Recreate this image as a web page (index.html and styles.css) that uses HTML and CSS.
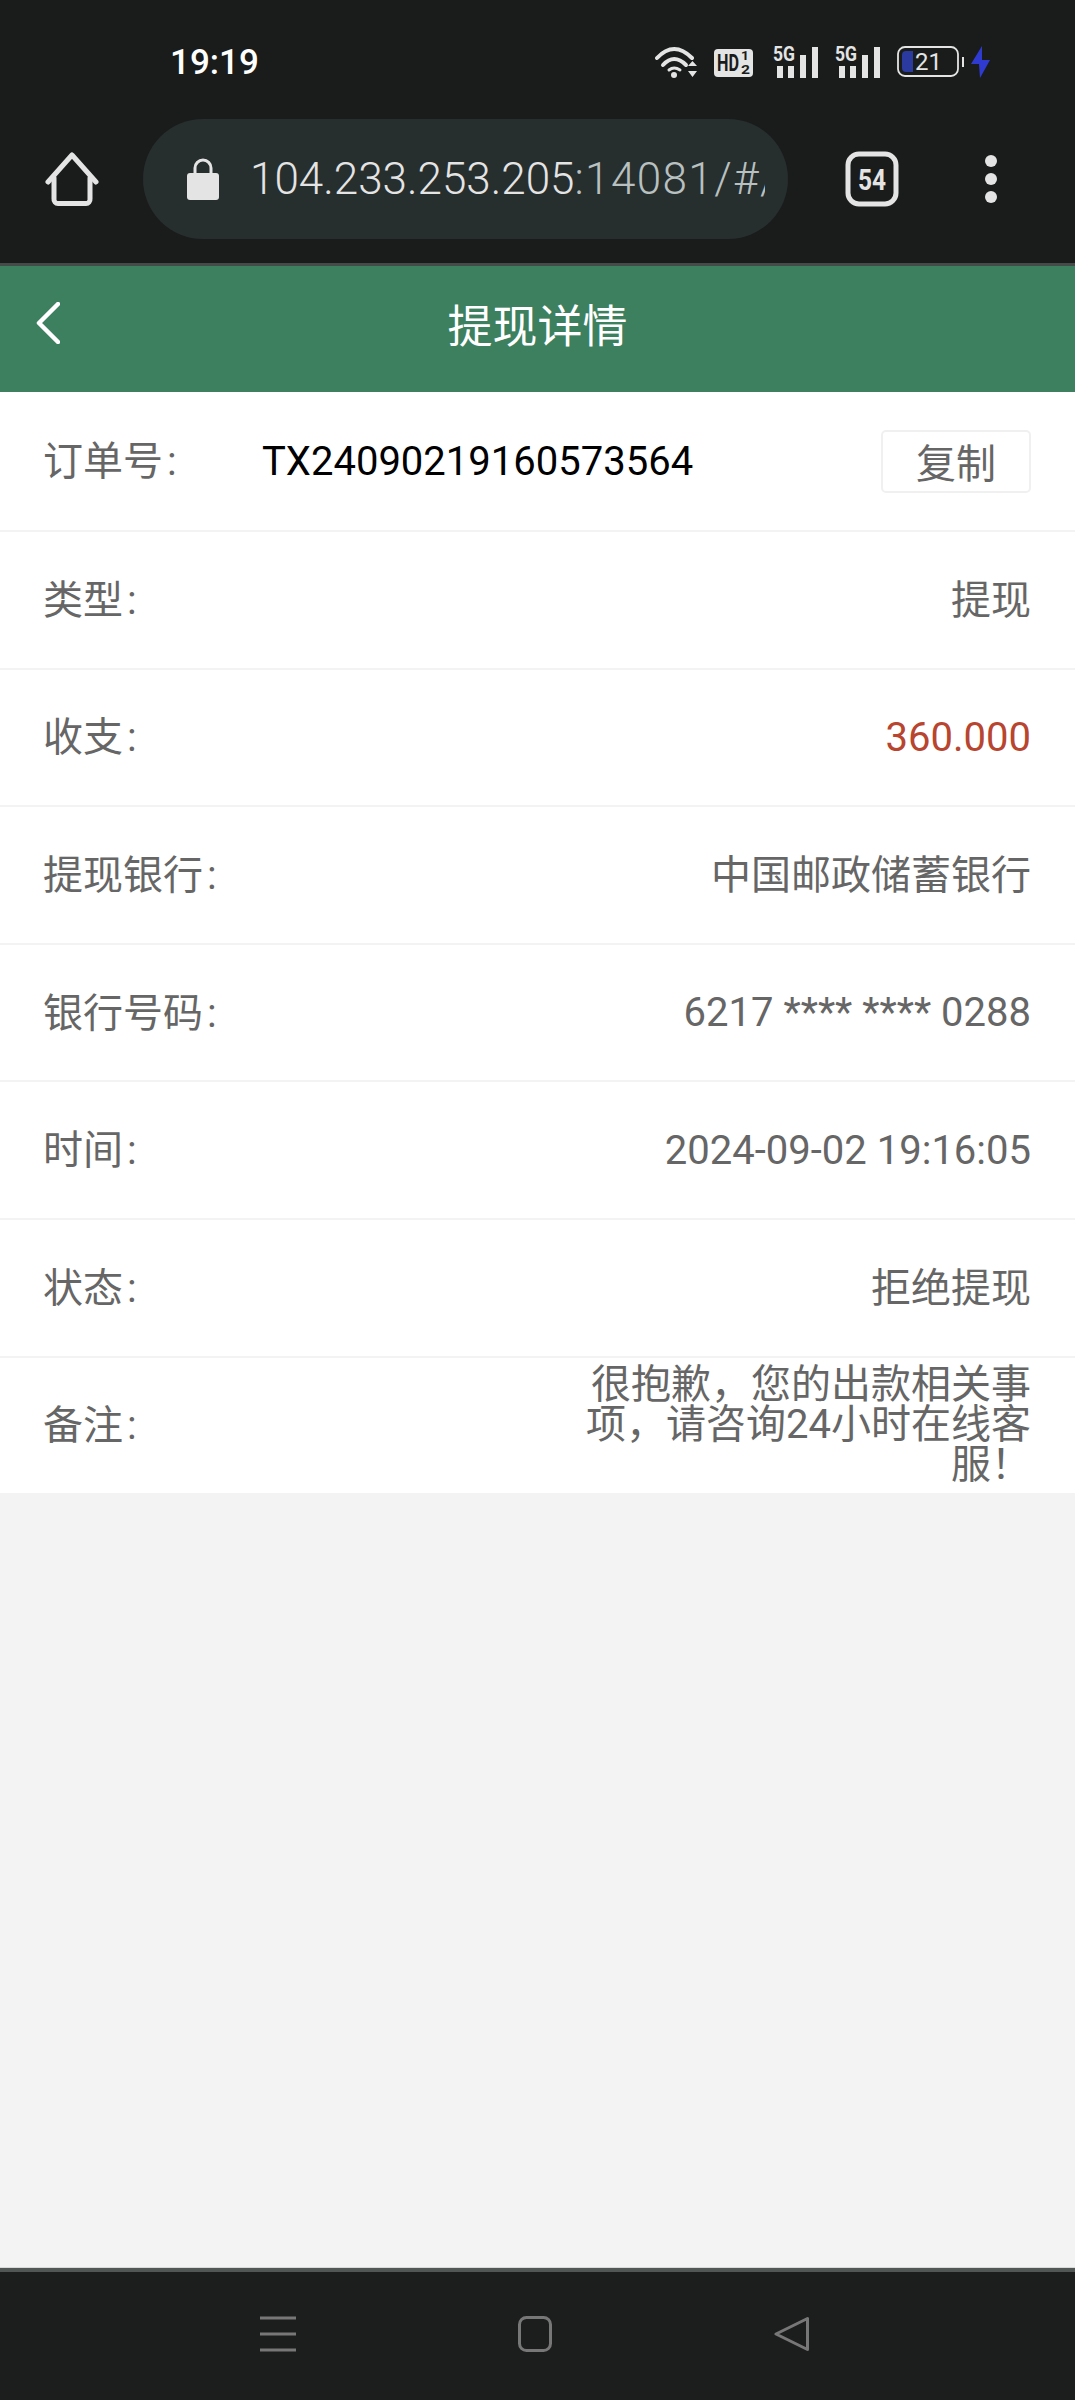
FILE: index.html
```html
<!DOCTYPE html>
<html lang="zh-CN">
<head>
    <meta charset="UTF-8">
    <meta name="viewport" content="width=device-width, initial-scale=1.0">
    <title>提现详情</title>
    <link rel="stylesheet" href="styles.css">
</head>
<body>
    <div class="status-bar">
        <span class="clock">19:19</span>
        <div class="status-icons">
            <svg class="icon-wifi" width="43" height="34" viewBox="0 0 43 34" fill="none" stroke="#e4e4e4" stroke-width="4" stroke-linecap="round">
                <path d="M2 13Q19 -5 37 13"/>
                <path d="M8 20Q19 8 31 20"/>
                <path d="M14 25Q19 21 25 25" stroke-width="3"/>
                <circle cx="19" cy="30" r="3" fill="#e4e4e4" stroke="none"/>
                <path d="M33 21H42L37.500 16ZM33 26H42L37.500 32Z" fill="#e4e4e4" stroke="none"/>
            </svg>
            <svg class="icon-hd" width="39" height="28" viewBox="0 0 39 28">
                <rect width="39" height="28" rx="4" fill="#e4e4e4"/>
                <text class="hd-text" x="3" y="22" textLength="22" lengthAdjust="spacingAndGlyphs">HD</text>
                <text class="hd-frac" x="27" y="11" textLength="8" lengthAdjust="spacingAndGlyphs">1</text>
                <text class="hd-frac" x="27" y="25" textLength="9" lengthAdjust="spacingAndGlyphs">2</text>
            </svg>
            <svg class="icon-signal" width="46" height="36" viewBox="0 -4 46 36" fill="#e4e4e4">
                <text class="sig-text" x="0" y="15" textLength="22" lengthAdjust="spacingAndGlyphs">5G</text>
                <rect x="4" y="20" width="6" height="12"/>
                <rect x="15" y="20" width="6" height="12"/>
                <rect x="27" y="9" width="6" height="23"/>
                <rect x="39" y="1" width="6" height="31"/>
            </svg>
            <svg class="icon-signal icon-signal-2" width="46" height="36" viewBox="0 -4 46 36" fill="#e4e4e4">
                <text class="sig-text" x="0" y="15" textLength="22" lengthAdjust="spacingAndGlyphs">5G</text>
                <rect x="4" y="20" width="6" height="12"/>
                <rect x="15" y="20" width="6" height="12"/>
                <rect x="27" y="9" width="6" height="23"/>
                <rect x="39" y="1" width="6" height="31"/>
            </svg>
            <svg class="icon-battery" width="68" height="32" viewBox="0 0 68 32">
                <rect x="1" y="1" width="60" height="29" rx="7" fill="none" stroke="#e4e4e4" stroke-width="1.800"/>
                <path d="M5 9a4 4 0 0 1 4-4H16V26H9a4 4 0 0 1-4-4Z" fill="#2b3a9e"/>
                <rect x="65" y="11" width="2" height="10" fill="#e4e4e4"/>
                <text class="batt-text" x="18" y="24">21</text>
            </svg>
            <svg class="icon-bolt" width="20" height="32" viewBox="0 0 20 32">
                <path d="M11 0L0 18H8L9 32L19 14H11Z" fill="#2f3bd0"/>
            </svg>
        </div>
    </div>

    <div class="toolbar">
        <svg class="tool-home" width="54" height="56" viewBox="0 0 54 56" fill="none" stroke="#e4e4e4" stroke-width="5" stroke-linejoin="round" stroke-linecap="round">
            <path d="M3 31L27 4L51 31"/>
            <path d="M9 27V48a4 4 0 0 0 4 4.500H41a4 4 0 0 0 4-4.500V27"/>
        </svg>
        <div class="url-pill">
            <svg class="lock" width="32" height="42" viewBox="0 0 32 42">
                <path d="M8 16V10a8 8 0 0 1 16 0V16" fill="none" stroke="#e4e4e4" stroke-width="3"/>
                <rect y="15" width="32" height="27" rx="3" fill="#e4e4e4"/>
            </svg>
            <div class="url-text"><span class="url-host">104.233.253.205</span>:14081/#/</div>
        </div>
        <svg class="tool-tabs" width="54" height="56" viewBox="0 0 54 56">
            <rect x="3" y="3" width="48" height="50" rx="11" fill="none" stroke="#e4e4e4" stroke-width="5"/>
            <text class="tab-count" x="13" y="39" textLength="28" lengthAdjust="spacingAndGlyphs">54</text>
        </svg>
        <div class="tool-menu">
            <span class="dot"></span>
            <span class="dot"></span>
            <span class="dot"></span>
        </div>
    </div>

    <div class="page-header">
        <svg class="back" width="24" height="42" viewBox="0 0 24 42" fill="none" stroke="#fff" stroke-width="4.500" stroke-linecap="round" stroke-linejoin="round">
            <path d="M22 2L3 21L22 40"/>
        </svg>
        <h1 class="page-title">提现详情</h1>
    </div>

    <div class="content">
        <div class="row">
            <span class="label label-order">订单号<span class="colon">:</span></span>
            <span class="order-no">TX24090219160573564</span>
            <button class="copy-btn"><span class="cjk">复制</span></button>
        </div>
        <div class="row">
            <span class="label">类型<span class="colon">:</span></span>
            <span class="value cjk">提现</span>
        </div>
        <div class="row">
            <span class="label">收支<span class="colon">:</span></span>
            <span class="value amount">360.000</span>
        </div>
        <div class="row">
            <span class="label">提现银行<span class="colon">:</span></span>
            <span class="value cjk">中国邮政储蓄银行</span>
        </div>
        <div class="row">
            <span class="label">银行号码<span class="colon">:</span></span>
            <span class="value">6217 **** **** 0288</span>
        </div>
        <div class="row">
            <span class="label">时间<span class="colon">:</span></span>
            <span class="value">2024-09-02 19:16:05</span>
        </div>
        <div class="row">
            <span class="label">状态<span class="colon">:</span></span>
            <span class="value cjk">拒绝提现</span>
        </div>
        <div class="row">
            <span class="label">备注<span class="colon">:</span></span>
            <span class="value remark">很抱歉&#xFF0C;您的出款相关事项&#xFF0C;请咨询24小时在线客服&#xFF01;</span>
        </div>
    </div>

    <div class="nav-bar">
        <svg width="36" height="36" viewBox="0 0 36 36" fill="#777">
            <rect y="0.500" width="36" height="3"/>
            <rect y="16.500" width="36" height="3"/>
            <rect y="32.500" width="36" height="3"/>
        </svg>
        <svg width="36" height="36" viewBox="0 0 36 36" fill="none" stroke="#777" stroke-width="3">
            <rect x="2.500" y="1.500" width="31" height="33" rx="7"/>
        </svg>
        <svg width="36" height="36" viewBox="0 0 36 36" fill="none" stroke="#777" stroke-width="3" stroke-linejoin="round">
            <path d="M33.500 2.500V33.500L2 18Z"/>
        </svg>
    </div>
</body>
</html>
```

FILE: styles.css
```css
* {
    box-sizing: border-box;
}
body {
    margin: 0;
    height: 2400px;
    display: flex;
    flex-direction: column;
    font-family: Roboto, "Noto Sans CJK SC", sans-serif;
    background: #f3f3f3;
    overflow: hidden;
}

/* phone status bar */
.status-bar {
    height: 119px;
    background: #1a1c1c;
    display: flex;
    align-items: flex-start;
    justify-content: space-between;
    padding: 45px 84px 0 170px;
}
.clock {
    color: #fff;
    font-size: 35px;
    font-weight: 500;
    line-height: 36px;
}
.status-icons {
    display: flex;
    align-items: flex-start;
}
.icon-hd {
    margin-left: 16px;
    margin-top: 4px;
}
.icon-signal {
    margin-left: 20px;
    margin-top: -3px;
}
.icon-signal-2 {
    margin-left: 16px;
}
.icon-battery {
    margin-left: 16px;
    margin-top: 1px;
}
.icon-bolt {
    margin-left: 6px;
    margin-top: 1px;
}
.hd-text {
    font-size: 24px;
    font-weight: 700;
    fill: #1a1c1c;
}
.hd-frac {
    font-size: 12px;
    font-weight: 700;
    fill: #1a1c1c;
}
.sig-text {
    font-size: 20px;
    font-weight: 700;
    fill: #e4e4e4;
}
.batt-text {
    font-size: 24px;
    fill: #e4e4e4;
}

/* browser toolbar */
.toolbar {
    height: 144px;
    background: #1a1c1c;
    display: flex;
    align-items: center;
    padding: 0 0 24px 45px;
}
.url-pill {
    width: 645px;
    height: 120px;
    margin-left: 44px;
    border-radius: 60px;
    background: #272e2e;
    display: flex;
    align-items: center;
    padding: 0 23px 0 44px;
    gap: 31px;
    overflow: hidden;
}
.lock {
    flex: none;
}
.url-text {
    font-size: 44px;
    font-weight: 300;
    letter-spacing: 1.4px;
    color: #b8c0c0;
    white-space: nowrap;
    overflow: hidden;
    min-width: 0;
}
.url-host {
    color: #e4e4e4;
    letter-spacing: 0;
}
.tool-tabs {
    margin-left: 57px;
}
.tab-count {
    font-size: 30px;
    font-weight: 700;
    fill: #e4e4e4;
}
.tool-menu {
    margin-left: 86px;
    display: flex;
    flex-direction: column;
    gap: 6px;
}
.dot {
    width: 12px;
    height: 12px;
    border-radius: 50%;
    background: #e4e4e4;
}

/* green title bar */
.page-header {
    height: 129px;
    background: #3d8060;
    border-top: 3px solid #454b49;
    padding-bottom: 12px;
    display: flex;
    align-items: center;
    justify-content: center;
    position: relative;
}
.back {
    position: absolute;
    left: 36px;
    top: 36px;
}
.page-title {
    margin: 0;
    color: #fff;
    font-size: 45px;
    font-weight: 400;
}

/* detail rows */
.content {
    flex: 1;
}
.row {
    height: 137.6px;
    background: #fff;
    border-bottom: 2.6px solid #f3f3f3;
    display: flex;
    align-items: center;
    justify-content: space-between;
    padding: 0 44px 0 43px;
    font-size: 40px;
    color: #666;
}
.row:first-child {
    height: 140px;
}
.label {
    flex: none;
    margin-bottom: 6px;
}
.cjk {
    margin-bottom: 5px;
}
.colon {
    margin-left: 4px;
}
.label-order {
    width: 219px;
}
.order-no {
    color: #000;
    flex: 1;
}
.copy-btn {
    width: 150px;
    height: 63px;
    padding: 0;
    background: #fff;
    border: 2px solid #f0f0f0;
    border-radius: 5px;
    font-family: inherit;
    font-size: 40px;
    color: #666;
}
.copy-btn .cjk {
    display: block;
    margin-bottom: 3px;
}
.value {
    text-align: right;
}
.amount {
    color: #b8452f;
}
.remark {
    width: 460px;
    line-height: 40px;
}

/* phone nav bar */
.nav-bar {
    height: 132px;
    background: #1c1e1d;
    border-top: 4px solid #515755;
    box-shadow: 0 -1px #d8d8d8;
    display: flex;
    align-items: flex-start;
    justify-content: center;
    gap: 221px;
    padding: 44px 5px 0 0;
}
```
